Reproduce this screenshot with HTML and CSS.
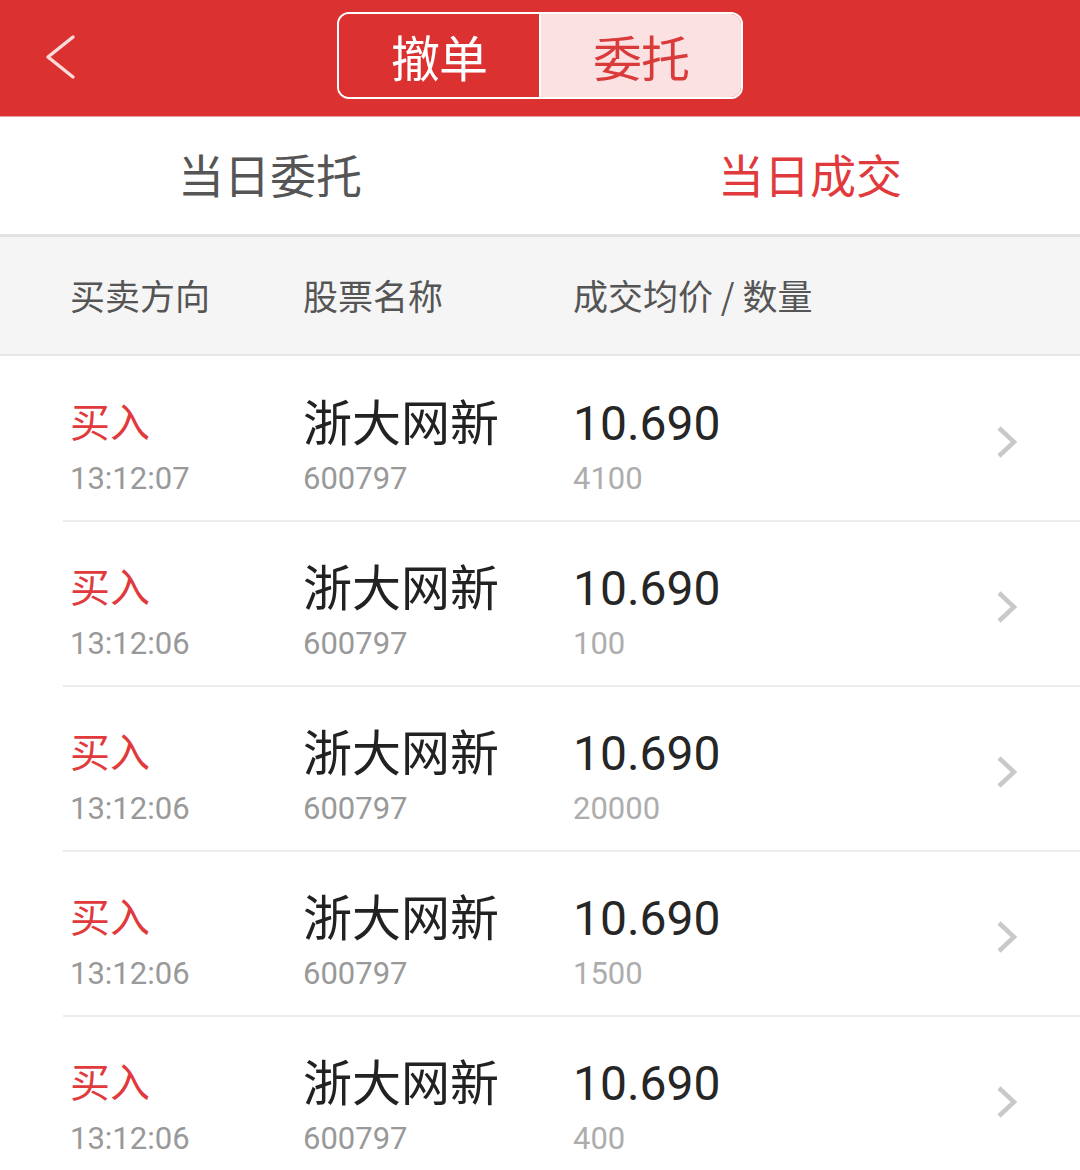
FILE: index.html
```html
<!DOCTYPE html>
<html lang="zh-CN">
<head>
<meta charset="utf-8">
<title>当日成交</title>
<link rel="stylesheet" href="styles.css">
</head>
<body>
<div class="page">
  <header class="topbar">
    <div class="back">
      <svg width="40" height="50" viewBox="0 0 40 50"><polyline points="30,5 5,25 30,45" fill="none" stroke="#fbdada" stroke-width="3.5" stroke-linecap="round" stroke-linejoin="round"/></svg>
    </div>
    <div class="seg">
      <div class="seg-item active">撤单</div>
      <div class="seg-item">委托</div>
    </div>
  </header>
  <nav class="tabs">
    <div class="tab">当日委托</div>
    <div class="tab current">当日成交</div>
  </nav>
  <div class="colhead">
    <div class="c1">买卖方向</div>
    <div class="c2">股票名称</div>
    <div class="c3">成交均价 / 数量</div>
  </div>
  <div class="list">
    <div class="row">
      <div class="c1"><div class="dir">买入</div><div class="sub">13:12:07</div></div>
      <div class="c2"><div class="name">浙大网新</div><div class="sub">600797</div></div>
      <div class="c3"><div class="price">10.690</div><div class="sub light">4100</div></div>
      <div class="arrow"><svg width="26" height="40" viewBox="0 0 26 40"><polyline points="5,5 20,19 5,33" fill="none" stroke="#c9c9c9" stroke-width="4.5"/></svg></div>
    </div>
    <div class="row">
      <div class="c1"><div class="dir">买入</div><div class="sub">13:12:06</div></div>
      <div class="c2"><div class="name">浙大网新</div><div class="sub">600797</div></div>
      <div class="c3"><div class="price">10.690</div><div class="sub light">100</div></div>
      <div class="arrow"><svg width="26" height="40" viewBox="0 0 26 40"><polyline points="5,5 20,19 5,33" fill="none" stroke="#c9c9c9" stroke-width="4.5"/></svg></div>
    </div>
    <div class="row">
      <div class="c1"><div class="dir">买入</div><div class="sub">13:12:06</div></div>
      <div class="c2"><div class="name">浙大网新</div><div class="sub">600797</div></div>
      <div class="c3"><div class="price">10.690</div><div class="sub light">20000</div></div>
      <div class="arrow"><svg width="26" height="40" viewBox="0 0 26 40"><polyline points="5,5 20,19 5,33" fill="none" stroke="#c9c9c9" stroke-width="4.5"/></svg></div>
    </div>
    <div class="row">
      <div class="c1"><div class="dir">买入</div><div class="sub">13:12:06</div></div>
      <div class="c2"><div class="name">浙大网新</div><div class="sub">600797</div></div>
      <div class="c3"><div class="price">10.690</div><div class="sub light">1500</div></div>
      <div class="arrow"><svg width="26" height="40" viewBox="0 0 26 40"><polyline points="5,5 20,19 5,33" fill="none" stroke="#c9c9c9" stroke-width="4.5"/></svg></div>
    </div>
    <div class="row">
      <div class="c1"><div class="dir">买入</div><div class="sub">13:12:06</div></div>
      <div class="c2"><div class="name">浙大网新</div><div class="sub">600797</div></div>
      <div class="c3"><div class="price">10.690</div><div class="sub light">400</div></div>
      <div class="arrow"><svg width="26" height="40" viewBox="0 0 26 40"><polyline points="5,5 20,19 5,33" fill="none" stroke="#c9c9c9" stroke-width="4.5"/></svg></div>
    </div>
  </div>
</div>
</body>
</html>
```

FILE: styles.css
```css
* { box-sizing: border-box; margin: 0; padding: 0; }
html, body { background: #fff; }
body {
  font-family: Roboto, "Noto Sans CJK SC", sans-serif;
  width: 1080px;
  height: 1170px;
  overflow: hidden;
}
.page { display: flex; flex-direction: column; }

.topbar {
  height: 117px;
  background: #dc3131;
  border-bottom: 1px solid #e7a0a0;
  display: flex;
  align-items: center;
  justify-content: center;
  position: relative;
}
.back {
  position: absolute;
  left: 43px;
  top: 32px;
  width: 40px;
  height: 50px;
}
.back svg { display: block; }
.seg {
  margin-top: -5px;
  width: 406px;
  height: 87px;
  border: 2.5px solid #fff;
  border-radius: 12px;
  display: flex;
  overflow: hidden;
}
.seg-item {
  flex: 1;
  display: flex;
  align-items: center;
  justify-content: center;
  font-family: "Noto Sans CJK SC", sans-serif;
  font-size: 49px;
  color: #d93a3a;
  background: #fbe1e2;
  letter-spacing: -1px;
}
.seg-item.active {
  background: #dc3131;
  color: #fff;
  border-right: 2.5px solid #fff;
}

.tabs {
  height: 120px;
  display: flex;
  border-bottom: 3px solid #e2e2e2;
}
.tab {
  flex: 1;
  display: flex;
  align-items: center;
  justify-content: center;
  font-family: "Noto Sans CJK SC", sans-serif;
  font-size: 46px;
  color: #555;
  padding-bottom: 5px;
}
.tab.current { color: #e13a3c; }

.colhead {
  height: 119px;
  background: #f5f5f5;
  border-bottom: 2px solid #e6e6e6;
  display: flex;
  align-items: center;
  padding-left: 70px;
  padding-bottom: 2px;
  font-family: "Noto Sans CJK SC", sans-serif;
  font-size: 35px;
  color: #555;
}
.c1 { width: 233px; }
.c2 { width: 270px; }
.c3 { flex: 1; }

.list { padding-top: 1px; }
.row {
  height: 165px;
  margin-left: 63px;
  padding-left: 7px;
  border-bottom: 2px solid #ececec;
  display: flex;
  align-items: flex-start;
  padding-top: 36px;
}
.row .c1, .row .c2, .row .c3 { display: flex; flex-direction: column; }
.dir {
  height: 54px;
  line-height: 54px;
  font-family: "Noto Sans CJK SC", sans-serif;
  font-size: 40px;
  color: #e13a3c;
}
.name {
  height: 54px;
  line-height: 54px;
  font-family: "Noto Sans CJK SC", sans-serif;
  font-size: 49px;
  color: #222;
}
.price {
  height: 54px;
  line-height: 54px;
  margin-top: 4px;
  font-family: Roboto, sans-serif;
  font-size: 48px;
  color: #262626;
}
.sub {
  height: 40px;
  line-height: 40px;
  margin-top: 12px;
  font-family: Roboto, sans-serif;
  font-size: 31px;
  color: #999;
}
.sub.light { color: #adadad; margin-top: 8px; }
.arrow {
  width: 26px;
  margin-left: auto;
  margin-right: 60px;
  margin-top: 30px;
}
.arrow svg { display: block; }
```
